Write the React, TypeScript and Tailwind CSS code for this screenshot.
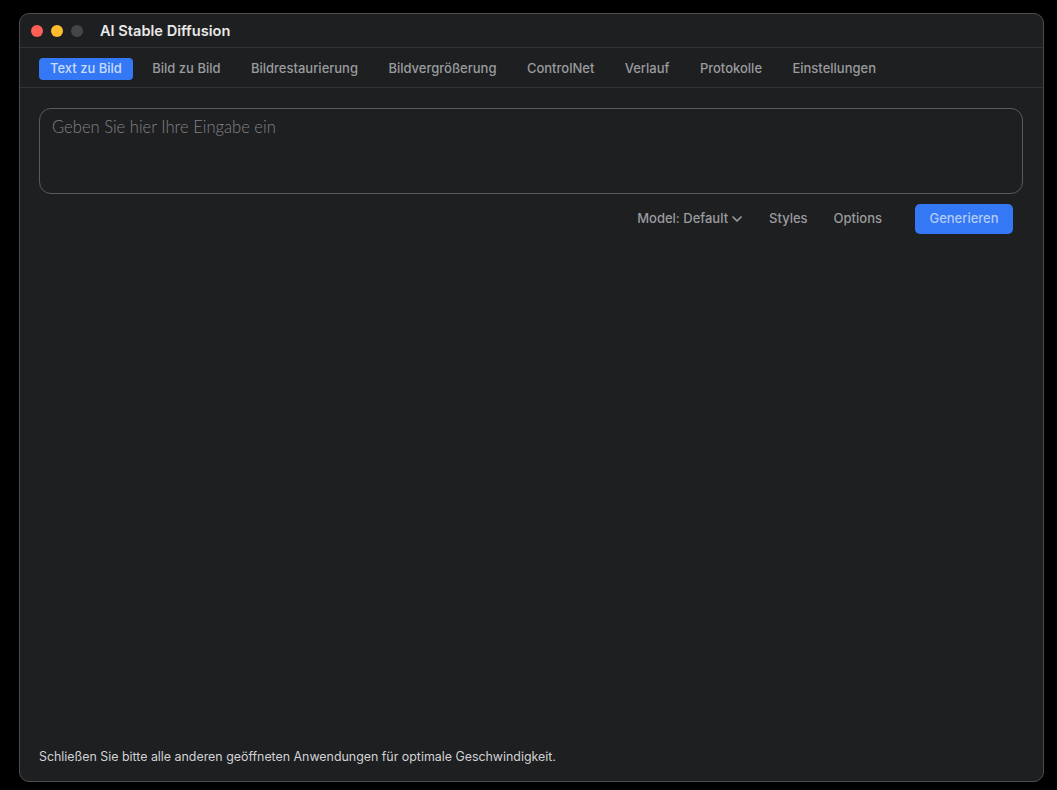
import { ChevronDown } from 'lucide-react';

const tabs = [
  'Text zu Bild',
  'Bild zu Bild',
  'Bildrestaurierung',
  'Bildvergrößerung',
  'ControlNet',
  'Verlauf',
  'Protokolle',
  'Einstellungen',
];

export default function App() {
  return (
    <div className="min-h-[790px] w-[1057px] bg-black pl-[19px] pt-[13px]" style={{ fontFamily: 'Inter, sans-serif' }}>
      <div className="flex h-[769px] w-[1025px] flex-col overflow-hidden rounded-[10px] border border-[#4b4c4f] bg-[#1e1f21]">
        {/* Title bar */}
        <div className="flex h-[34px] shrink-0 items-center border-b border-[#323336] pl-[11px] pt-[1px]">
          <div className="flex items-center gap-2">
            <span className="h-3 w-3 rounded-full bg-[#fe5f57]" />
            <span className="h-3 w-3 rounded-full bg-[#febc2e]" />
            <span className="h-3 w-3 rounded-full bg-[#45464a]" />
          </div>
          <span className="ml-[17px] pt-[1px] text-[14.6px] font-semibold text-[#e8e8e8]">AI Stable Diffusion</span>
        </div>

        {/* Tabs */}
        <div className="flex h-[40px] shrink-0 items-center gap-[8.4px] border-b border-[#323336] pl-[19px] pt-[2px]">
          {tabs.map((t, i) => (
            <button
              key={t}
              className={
                i === 0
                  ? 'h-[22px] rounded-[4px] bg-[#3478f6] px-[11px] text-[13px] font-medium text-[#c9dafc]'
                  : 'h-[22px] rounded-[4px] px-[11px] text-[13px] font-medium text-[#9a9b9e]'
              }
            >
              {t}
            </button>
          ))}
        </div>

        {/* Content */}
        <div className="flex flex-1 flex-col px-[19px] pt-[20px]">
          <div className="h-[86px] w-[984px] rounded-[12px] border border-[#5a5b5e] px-[12px] pt-[6px]">
            <span className="text-[16.6px] font-light text-[#808185]" style={{ fontFamily: 'Lato, sans-serif' }}>
              Geben Sie hier Ihre Eingabe ein
            </span>
          </div>

          <div className="mt-[10px] flex items-center justify-end pr-[11px]">
            <button className="flex items-center gap-[1px] text-[13px] font-medium text-[#9a9b9e]">
              Model: Default
              <ChevronDown size={16} strokeWidth={2.6} />
            </button>
            <button className="ml-[24px] text-[13px] font-medium text-[#9a9b9e]">Styles</button>
            <button className="ml-[26px] text-[13px] font-medium text-[#9a9b9e]">Options</button>
            <button className="ml-[33px] h-[30px] w-[98px] rounded-[5px] bg-[#3478f6] text-[13px] font-medium text-[#b3cbf6]">
              Generieren
            </button>
          </div>

          <div className="flex-1" />

          <div className="pb-[14px] text-[12.4px] text-[#d2d3d5]">
            Schließen Sie bitte alle anderen geöffneten Anwendungen für optimale Geschwindigkeit.
          </div>
        </div>
      </div>
    </div>
  );
}
